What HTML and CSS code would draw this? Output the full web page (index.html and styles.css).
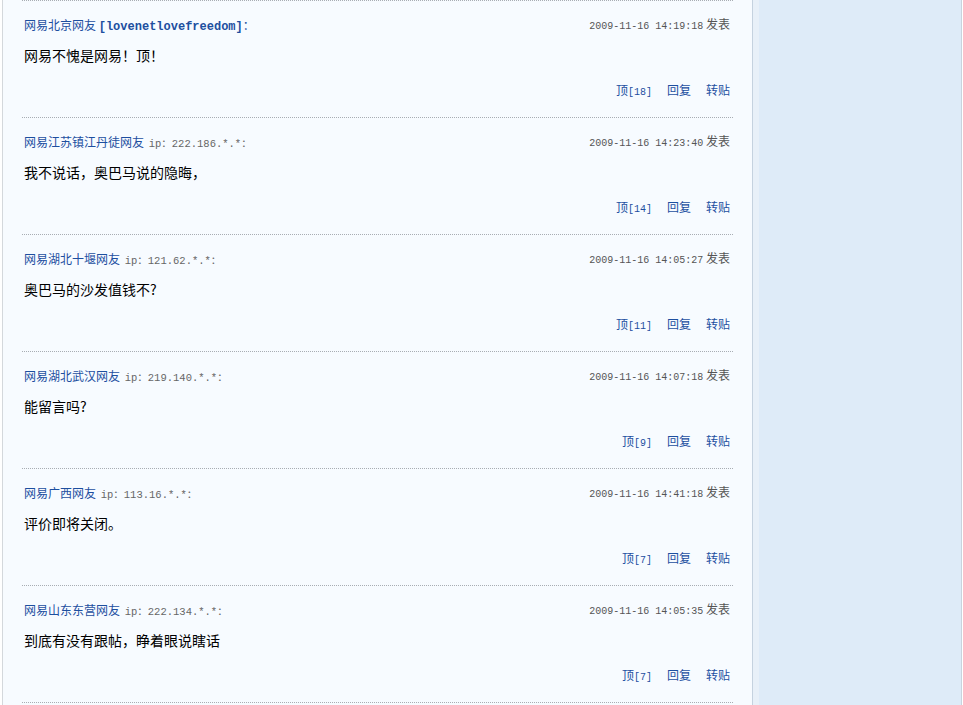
FILE: index.html
```html
<!DOCTYPE html>
<html lang="zh-CN">
<head>
    <meta charset="UTF-8">
    <title>网友评论</title>
    <link rel="stylesheet" href="styles.css">
</head>
<body>
    <div class="page">
        <div class="main">
            <div class="list">
                <div class="post">
                    <div class="head">
                        <div class="who"><a class="name">网易北京网友</a> <span class="nick">[lovenetlovefreedom]</span><span class="colon">：</span></div>
                        <div class="time"><span class="num">2009-11-16 14:19:18</span> 发表</div>
                    </div>
                    <div class="text">网易不愧是网易！顶！</div>
                    <div class="actions"><a>顶<span class="num">[18]</span></a><a>回复</a><a>转贴</a></div>
                </div>
                <div class="post">
                    <div class="head">
                        <div class="who"><a class="name">网易江苏镇江丹徒网友</a> <span class="ip">ip：222.186.*.*：</span></div>
                        <div class="time"><span class="num">2009-11-16 14:23:40</span> 发表</div>
                    </div>
                    <div class="text">我不说话，奥巴马说的隐晦，</div>
                    <div class="actions"><a>顶<span class="num">[14]</span></a><a>回复</a><a>转贴</a></div>
                </div>
                <div class="post">
                    <div class="head">
                        <div class="who"><a class="name">网易湖北十堰网友</a> <span class="ip">ip：121.62.*.*：</span></div>
                        <div class="time"><span class="num">2009-11-16 14:05:27</span> 发表</div>
                    </div>
                    <div class="text">奥巴马的沙发值钱不?</div>
                    <div class="actions"><a>顶<span class="num">[11]</span></a><a>回复</a><a>转贴</a></div>
                </div>
                <div class="post">
                    <div class="head">
                        <div class="who"><a class="name">网易湖北武汉网友</a> <span class="ip">ip：219.140.*.*：</span></div>
                        <div class="time"><span class="num">2009-11-16 14:07:18</span> 发表</div>
                    </div>
                    <div class="text">能留言吗?</div>
                    <div class="actions"><a>顶<span class="num">[9]</span></a><a>回复</a><a>转贴</a></div>
                </div>
                <div class="post">
                    <div class="head">
                        <div class="who"><a class="name">网易广西网友</a> <span class="ip">ip：113.16.*.*：</span></div>
                        <div class="time"><span class="num">2009-11-16 14:41:18</span> 发表</div>
                    </div>
                    <div class="text">评价即将关闭。</div>
                    <div class="actions"><a>顶<span class="num">[7]</span></a><a>回复</a><a>转贴</a></div>
                </div>
                <div class="post">
                    <div class="head">
                        <div class="who"><a class="name">网易山东东营网友</a> <span class="ip">ip：222.134.*.*：</span></div>
                        <div class="time"><span class="num">2009-11-16 14:05:35</span> 发表</div>
                    </div>
                    <div class="text">到底有没有跟帖，睁着眼说瞎话</div>
                    <div class="actions"><a>顶<span class="num">[7]</span></a><a>回复</a><a>转贴</a></div>
                </div>
                <div class="post last"></div>
            </div>
        </div>
        <div class="side"></div>
    </div>
</body>
</html>
```

FILE: styles.css
```css
body {
    margin: 0;
    background-color: #fff;
    font-family: "Noto Sans CJK SC", sans-serif;
    font-size: 12px;
    color: #000;
}
.page {
    display: flex;
    height: 705px;
    margin-left: 2px;
    overflow: hidden;
}
.main {
    width: 749px;
    background-color: #f7fbff;
    border-left: 1px solid #d4d8dc;
    border-right: 1px solid #c5d2df;
}
.list {
    width: 711px;
    margin-left: 19px;
}
.post {
    height: 116px;
    border-top: 1px dotted #a8adb3;
    padding: 0 3px 0 2px;
}
.post.last {
    height: 20px;
}
.head {
    display: flex;
    justify-content: space-between;
    align-items: flex-start;
    padding-top: 17px;
    line-height: 14px;
}
.name {
    color: #1d4f9f;
}
.nick {
    font-family: "Liberation Mono", monospace;
    font-weight: bold;
    font-size: 12px;
    color: #1d4f9f;
}
.colon {
    color: #1d4f9f;
}
.ip {
    font-family: "Liberation Mono", "Noto Sans CJK SC", monospace;
    font-size: 10.5px;
    color: #666;
    margin-left: 2px;
}
.time {
    color: #555;
    line-height: 12px;
}
.num {
    font-family: "Liberation Mono", monospace;
    font-size: 10px;
}
.text {
    margin-top: 13px;
    font-size: 14px;
    line-height: 16px;
}
.actions {
    margin-top: 20px;
    line-height: 14px;
    text-align: right;
}
.actions a {
    color: #1d4f9f;
    margin-left: 15px;
}
.side {
    width: 202px;
    background-color: #deebf8;
    border-left: 6px solid #e8f0f8;
    border-right: 1px solid #c9d3dd;
}
```
